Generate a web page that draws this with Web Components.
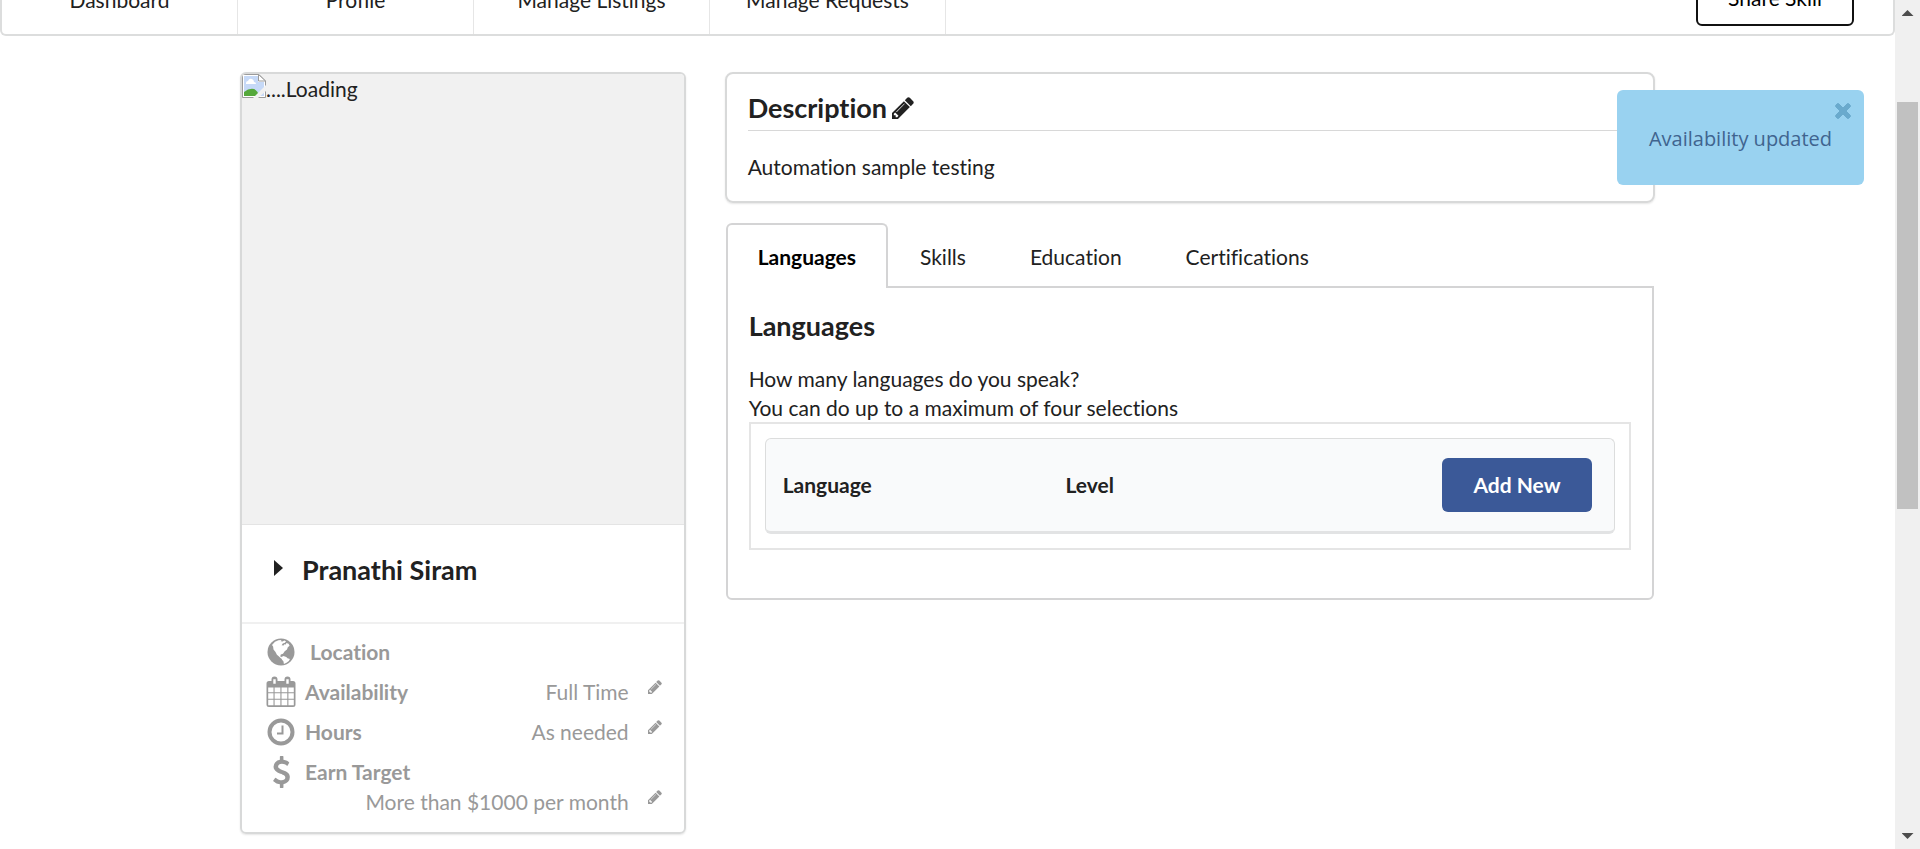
<!DOCTYPE html>
<html lang="en">
<head>
<meta charset="utf-8">
<title>Profile</title>
<style>
  html, body { margin: 0; height: 100%; }
  body { font: 21px/30px Lato, "Liberation Sans", sans-serif; font-variant-ligatures: no-common-ligatures; color: #212121; background: #fff; overflow: hidden; }
</style>
</head>
<body>
<profile-page></profile-page>
<script>
const BASE = `<style>
  *, *::before, *::after { box-sizing: border-box; }
  :host { display: block; box-sizing: border-box; }
  button { font: inherit; font-variant-ligatures: inherit; color: inherit; background: none; border: 0; padding: 0; margin: 0; cursor: pointer; }
  a { color: inherit; text-decoration: none; }
  h2, p { margin: 0; padding: 0; }
  h2 { font-size: 27px; line-height: 35px; font-weight: 700; }
</style>`;

function define(name, html) {
  const template = document.createElement('template');
  template.innerHTML = BASE + html;
  customElements.define(name, class extends HTMLElement {
    constructor() {
      super();
      this.attachShadow({ mode: 'open' }).append(template.content.cloneNode(true));
    }
  });
}

const ICONS = {
  pencil: ['128 128 1536 1536', '<path d="M491 1536l91-91-235-235-91 91v107h128v128h107zm523-928q0-22-22-22-10 0-17 7l-542 542q-7 7-7 17 0 22 22 22 10 0 17-7l542-542q7-7 7-17zm-54-192l416 416-832 832h-416v-416zm683 96q0 53-37 90l-166 166-416-416 166-165q36-38 90-38 53 0 91 38l235 234q37 39 37 91z"/>'],
  globe: ['0 0 30 30', '<circle cx="15" cy="15" r="13.5"/><path fill="#fff" d="M6 8 9 4.800l3.500-1.600 3-.3-.8 1.300 2 .3 1.500-1 1.800.8-1 1.500-2.200.6-1.200 1.800 2 .2.800-1.200 1.400.4.600-1.600 2.200.8 1 2-1.800 1.400-.8 2.200-2.300 1.800-1.700 2.600-2.200.6-.6 2 1.500.6 1.200 2.200-1.800-.6-2.400-2.400-1.800-1.500-1.400-2.700-2-2.600-.4-3z"/><path fill="#fff" d="M15.500 20l2-1 2.800 1 1.200 1.200 2.400.8-1 2-2.400 1.800-2.600 1.200-.4-2.600-1.600-1.800z"/>'],
  calendar: ['0 0 30 32', '<path fill-rule="evenodd" d="M3 5h2.500V3.500A3 3 0 0 1 11.500 3.500V5h7V3.500A3 3 0 0 1 24.500 3.500V5H27a2.500 2.500 0 0 1 2.500 2.500v21A2.500 2.500 0 0 1 27 31H3a2.500 2.500 0 0 1-2.500-2.500v-21A2.500 2.500 0 0 1 3 5zM7.300 3.200v4.600h2.400V3.200zM20.300 3.200v4.600h2.400V3.200zM2.200 11.500v4.800h5.300v-4.800zm6.400 0v4.800h5.800v-4.800zm6.900 0v4.800h5.800v-4.800zm6.900 0v4.800h5.400v-4.800zM2.200 17.300v5.500h5.300v-5.500zm6.400 0v5.500h5.800v-5.500zm6.900 0v5.500h5.800v-5.500zm6.900 0v5.500h5.400v-5.500zM2.200 23.800v5.500h5.300v-5.500zm6.400 0v5.500h5.800v-5.500zm6.900 0v5.500h5.800v-5.500zm6.900 0v5.500h5.400v-5.500z"/>'],
  clock: ['0 0 30 30', '<path fill="none" stroke="currentColor" stroke-width="4" d="M15 3.500a11.500 11.500 0 1 1 0 23a11.500 11.500 0 0 1 0-23z"/><path fill="none" stroke="currentColor" stroke-width="2" d="M16.500 8.500V16.500H11"/>'],
  dollar: ['384 0 1024 1792', '<path d="M1362 1185q0 153-99.500 263.500t-258.500 136.500v175q0 14-9 23t-23 9h-135q-13 0-22.500-9.500t-9.500-22.500v-175q-66-9-127.500-31t-101.500-44.500-74-48-46.500-37.500-17.500-18q-17-21-2-41l103-135q7-10 23-12 15-2 24 9l2 2q113 99 243 125 37 8 74 8 81 0 142.500-43t61.500-122q0-28-15-53t-33.500-42-58.500-37.500-66-32-80-32.500q-39-16-61.500-25t-61.500-26.500-62.500-31-56.500-35.500-53.500-42.500-43.500-49-35.500-58-21-66.500-8.500-78q0-138 98-242t255-134v-180q0-13 9.500-22.500t22.500-9.500h135q14 0 23 9t9 23v176q57 6 110.500 23t87 33.500 63.500 37.500 39 29 15 14q17 18 5 38l-81 146q-8 15-23 16-14 3-27-7-3-3-14.500-12t-39-26.500-58.500-32-74.500-26-85.500-11.500q-95 0-155 43t-60 111q0 26 8.500 48t29.500 41.500 39.500 33 56 31 60.500 27 70 27.500q53 20 81 31.500t76 35 75.500 42.500 62 50 53 63.500 31.500 76.500 13 94z"/>'],
  close: ['0 0 16 16', '<path d="M3.800.8 8 5l4.200-4.200q.8-.6 1.600 0l1.400 1.400q.6.800 0 1.600L11 8l4.200 4.200q.6.800 0 1.600l-1.400 1.400q-.8.600-1.600 0L8 11l-4.200 4.200q-.8.600-1.600 0L.8 13.800q-.6-.8 0-1.600L5 8 .8 3.800q-.6-.8 0-1.600L2.200.8q.8-.6 1.600 0z" stroke="currentColor"/>'],
  caret: ['0 0 9 16', '<path d="M0 0 9 8 0 16z"/>'],
  broken: ['0 0 24 24', '<path fill="#fff" stroke="#9b9b9b" d="M.5.500H17L23.500 7V23.500H.5z"/><path fill="#c6d9f7" d="M2 2h14v6h6v14H2z"/><path fill="#fff" d="M4 9q0-2 2-2 1-3 4-2 2 1 2 3 2 0 2 2H4z"/><path fill="#55a83b" d="M2 22v-4q5-4 10-3 4 2 5 7z"/><path fill="#f1f1f1" d="M24 11 11 24h5L24 17z"/><path fill="#fff" stroke="#9b9b9b" d="M16.500.500V7H23.500z"/>']
};

customElements.define('ui-icon', class extends HTMLElement {
  constructor() { super(); this.attachShadow({ mode: 'open' }); }
  connectedCallback() {
    const [box, body] = ICONS[this.getAttribute('name')];
    this.shadowRoot.innerHTML = `<style>
      :host { display: block; flex: none; }
      svg { display: block; width: 100%; height: 100%; fill: currentColor; }
    </style><svg viewBox="${box}" aria-hidden="true">${body}</svg>`;
  }
});

define('main-nav', `<style>
  :host { height: 36px; overflow: hidden; }
  nav { display: flex; align-items: flex-end; height: 100%; border: 2px solid #dcdddd; border-top: 0; border-radius: 0 0 6px 6px; }
  a { flex: 0 0 236px; height: 100%; display: flex; align-items: flex-end; justify-content: center; padding-bottom: 19px; border-right: 1px solid #e6e6e6; }
  button { width: 158px; height: 56px; margin: 0 39px 8px auto; border: 2px solid #111; border-radius: 6px; color: #000; }
</style>
<nav><a href="#">Dashboard</a><a href="#">Profile</a><a href="#">Manage Listings</a><a href="#">Manage Requests</a>
<button type="button">Share Skill</button></nav>`);

define('detail-row', `<style>
  :host { display: flex; flex-wrap: wrap; color: #999; }
  .label { display: flex; align-items: center; gap: 9px; font-weight: 700; height: 30px; }
  .icon { width: 30px; display: flex; justify-content: center; }
  .value { display: flex; flex: 1; justify-content: flex-end; gap: 19px; white-space: nowrap; }
  :host([stacked]) .value { flex-basis: 100%; }
</style>
<div class="label"><span class="icon"><slot name="icon"></slot></span><slot></slot></div>
<div class="value"><slot name="value"></slot></div>`);

define('edit-button', `<style>
  :host { display: flex; align-items: center; }
  ui-icon { width: 14px; height: 14px; margin-bottom: 10px; }
</style><button type="button" aria-label="Edit"><ui-icon name="pencil"></ui-icon></button>`);

define('profile-card', `<style>
  :host { border: 2px solid #d8d9d9; border-radius: 6px; box-shadow: 0 1px 2px #e6e6e6; overflow: hidden; }
  .photo { display: flex; align-items: flex-start; height: 451px; background: #f1f1f1; border-bottom: 1px solid #e4e4e4; }
  .photo ui-icon { width: 24px; height: 24px; }
  .name { display: flex; align-items: center; gap: 19px; padding: 27px 0 35px 32px; }
  .name ui-icon { width: 9px; height: 16px; margin-bottom: 4px; }
  .details { display: flex; flex-direction: column; gap: 10px; border-top: 2px solid #f0f0f0; padding: 13px 22px 15px 24px; }
  .globe, .clock { width: 30px; height: 30px; }
  .calendar { width: 30px; height: 32px; }
  .dollar { width: 19px; height: 32px; }
</style>
<div class="photo"><ui-icon name="broken"></ui-icon><span>....Loading</span></div>
<div class="name"><ui-icon name="caret"></ui-icon><h2>Pranathi Siram</h2></div>
<div class="details">
  <detail-row><ui-icon slot="icon" class="globe" name="globe"></ui-icon><span>&nbsp;Location</span></detail-row>
  <detail-row><ui-icon slot="icon" class="calendar" name="calendar"></ui-icon>Availability<span slot="value">Full Time</span><edit-button slot="value"></edit-button></detail-row>
  <detail-row><ui-icon slot="icon" class="clock" name="clock"></ui-icon>Hours<span slot="value">As needed</span><edit-button slot="value"></edit-button></detail-row>
  <detail-row stacked><ui-icon slot="icon" class="dollar" name="dollar"></ui-icon>Earn Target<span slot="value">More than $1000 per month</span><edit-button slot="value"></edit-button></detail-row>
</div>`);

define('description-card', `<style>
  :host { border: 2px solid #d8d9d9; border-radius: 8px; box-shadow: 0 1px 2px #e6e6e6; padding: 16px 21px 19px; }
  header { display: flex; align-items: center; gap: 5px; padding-bottom: 5px; border-bottom: 1px solid #d8d8d8; margin-bottom: 21px; }
  header ui-icon { width: 22px; height: 22px; }
</style>
<header><h2>Description</h2><button type="button" aria-label="Edit description"><ui-icon name="pencil"></ui-icon></button></header>
<p>Automation sample testing</p>`);

define('language-table', `<style>
  :host { border: 2px solid #e5e5e5; padding: 14px; }
  table { width: 100%; table-layout: fixed; border: 1px solid #dcdddd; border-bottom: 3px solid #e2e3e4; border-radius: 6px; border-spacing: 0; background: #f9fafb; }
  th { padding: 19px 17px; text-align: left; font-weight: 700; }
  th:last-child { padding-right: 22px; text-align: right; }
  button { width: 150px; height: 54px; border-radius: 6px; background: #3b5998; color: #fff; font-weight: 700; vertical-align: top; }
</style>
<table><thead><tr><th scope="col">Language</th><th scope="col">Level</th><th scope="col"><button type="button">Add New</button></th></tr></thead></table>`);

define('profile-tabs', `<style>
  .tabs { display: flex; }
  .tabs button { padding: 17px 30px 14px; border: 2px solid transparent; border-bottom: 0; }
  .tabs button[aria-selected=true] { position: relative; margin-bottom: -2px; padding-bottom: 16px; border-color: #d4d4d5; border-radius: 6px 6px 0 0; background: #fff; color: #000; font-weight: 700; }
  .panel { border: 2px solid #d4d4d5; border-radius: 0 0 6px 6px; padding: 20px 21px 48px; }
  h2 { margin-bottom: 21px; }
  p { line-height: 29px; }
</style>
<div class="tabs" role="tablist">
  <button type="button" role="tab" aria-selected="true">Languages</button>
  <button type="button" role="tab" aria-selected="false">Skills</button>
  <button type="button" role="tab" aria-selected="false">Education</button>
  <button type="button" role="tab" aria-selected="false">Certifications</button>
</div>
<div class="panel" role="tabpanel">
  <h2>Languages</h2>
  <p>How many languages do you speak?<br>You can do up to a maximum of four selections</p>
  <language-table></language-table>
</div>`);

define('toast-message', `<style>
  :host { position: absolute; top: 90px; right: 31px; width: 247px; padding: 34px 0 31px; border-radius: 6px; background: #99d2f0; color: #40648f; text-align: center; font-family: "Open Sans", "Noto Sans", sans-serif; font-size: 20px; }
  button { position: absolute; top: 13px; right: 13px; color: #6aaacd; }
  ui-icon { width: 16px; height: 16px; }
</style>
<div role="status"><slot></slot></div><button type="button" aria-label="Close"><ui-icon name="close"></ui-icon></button>`);

define('page-scrollbar', `<style>
  :host { display: flex; flex-direction: column; background: #f0f0f0; padding: 10px 2px; }
  .arrow { width: 12px; height: 6px; margin: 0 auto; background: #4d4d4d; }
  .up { clip-path: polygon(50% 0, 100% 100%, 0 100%); }
  .down { clip-path: polygon(0 0, 100% 0, 50% 100%); }
  .before { flex: 86; } .thumb { flex: 407; background: #c1c1c1; } .after { flex: 324; }
</style>
<div class="arrow up"></div><div class="before"></div><div class="thumb"></div><div class="after"></div><div class="arrow down"></div>`);

define('profile-page', `<style>
  :host { display: grid; grid-template-columns: 1fr 25px; height: 100vh; }
  .view { position: relative; overflow: hidden; }
  main { display: grid; grid-template-columns: 445fr 929fr; gap: 39px; align-items: start; max-width: 1415px; margin: 36px auto 0; }
  .right { display: grid; gap: 20px; }
  profile-tabs { margin: 0 1px; }
</style>
<div class="view">
  <main-nav></main-nav>
  <main>
    <profile-card></profile-card>
    <div class="right"><description-card></description-card><profile-tabs></profile-tabs></div>
  </main>
  <toast-message>Availability updated</toast-message>
</div>
<page-scrollbar></page-scrollbar>`);
</script>
</body>
</html>
